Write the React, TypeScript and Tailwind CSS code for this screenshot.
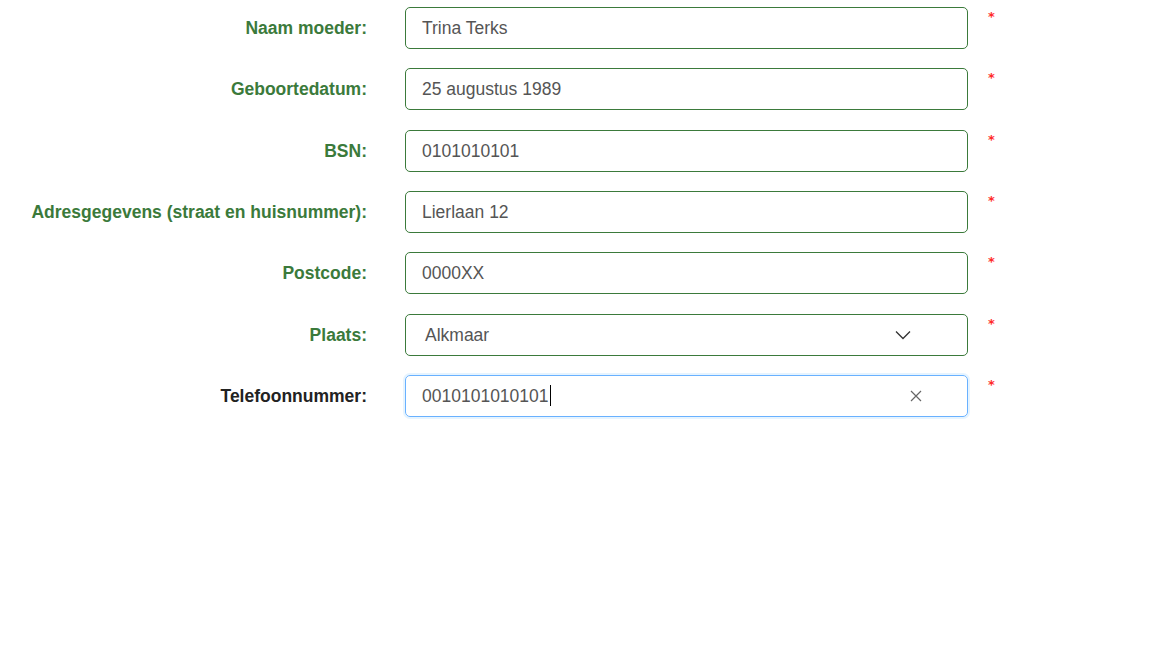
import React from "react";

const GREEN = "text-[#3b7a3b]";

function Star() {
  return <span className="text-[#ff2a2a] text-[13px] font-bold leading-none self-start mt-[3px] ml-[20px]" style={{ fontFamily: "'DejaVu Sans', sans-serif" }}>*</span>;
}

function Row({ label, children, dark }: { label: string; children: React.ReactNode; dark?: boolean }) {
  return (
    <div className="flex items-center h-[42px]">
      <div className={`w-[367px] text-right font-bold text-[17.5px] ${dark ? "text-[#222222]" : GREEN}`}>{label}</div>
      <div className="ml-[38px] w-[563px] h-[42px]">{children}</div>
      <Star />
    </div>
  );
}

function TextBox({ value }: { value: string }) {
  return (
    <div className="h-full rounded-[5px] border border-[#3b7a3b] flex items-center pl-[16px] text-[17.5px] text-[#555555]">
      {value}
    </div>
  );
}

export default function App() {
  return (
    <div className="w-[1152px] h-[648px] bg-white" style={{ fontFamily: "'Liberation Sans', Arial, sans-serif" }}>
      <div className="pt-[7px] flex flex-col gap-[19.33px]">
        <Row label="Naam moeder:"><TextBox value="Trina Terks" /></Row>
        <Row label="Geboortedatum:"><TextBox value="25 augustus 1989" /></Row>
        <Row label="BSN:"><TextBox value="0101010101" /></Row>
        <Row label="Adresgegevens (straat en huisnummer):"><TextBox value="Lierlaan 12" /></Row>
        <Row label="Postcode:"><TextBox value="0000XX" /></Row>
        <Row label="Plaats:">
          <div className="h-full rounded-[5px] border border-[#3b7a3b] flex items-center pl-[19px] pr-[56px] text-[17.5px] text-[#555555]">
            <span className="flex-1">Alkmaar</span>
            <svg width="16" height="10" viewBox="0 0 16 10" fill="none" stroke="#333" strokeWidth="1.3">
              <path d="M1 1.5 L8 8.5 L15 1.5" />
            </svg>
          </div>
        </Row>
        <Row label="Telefoonnummer:" dark>
          <div className="h-full rounded-[5px] border border-[#69b1ff] shadow-[0_0_0_2px_rgba(5,145,255,0.1)] flex items-center pl-[16px] pr-[45px] text-[17.5px] text-[#555555]">
            <span className="flex-1 flex items-center">0010101010101<span className="inline-block w-[1.5px] h-[21px] bg-black ml-[1px]" /></span>
            <svg width="12" height="12" viewBox="0 0 12 12" fill="none" stroke="#666" strokeWidth="1.2">
              <path d="M1 1 L11 11 M11 1 L1 11" />
            </svg>
          </div>
        </Row>
      </div>
    </div>
  );
}
